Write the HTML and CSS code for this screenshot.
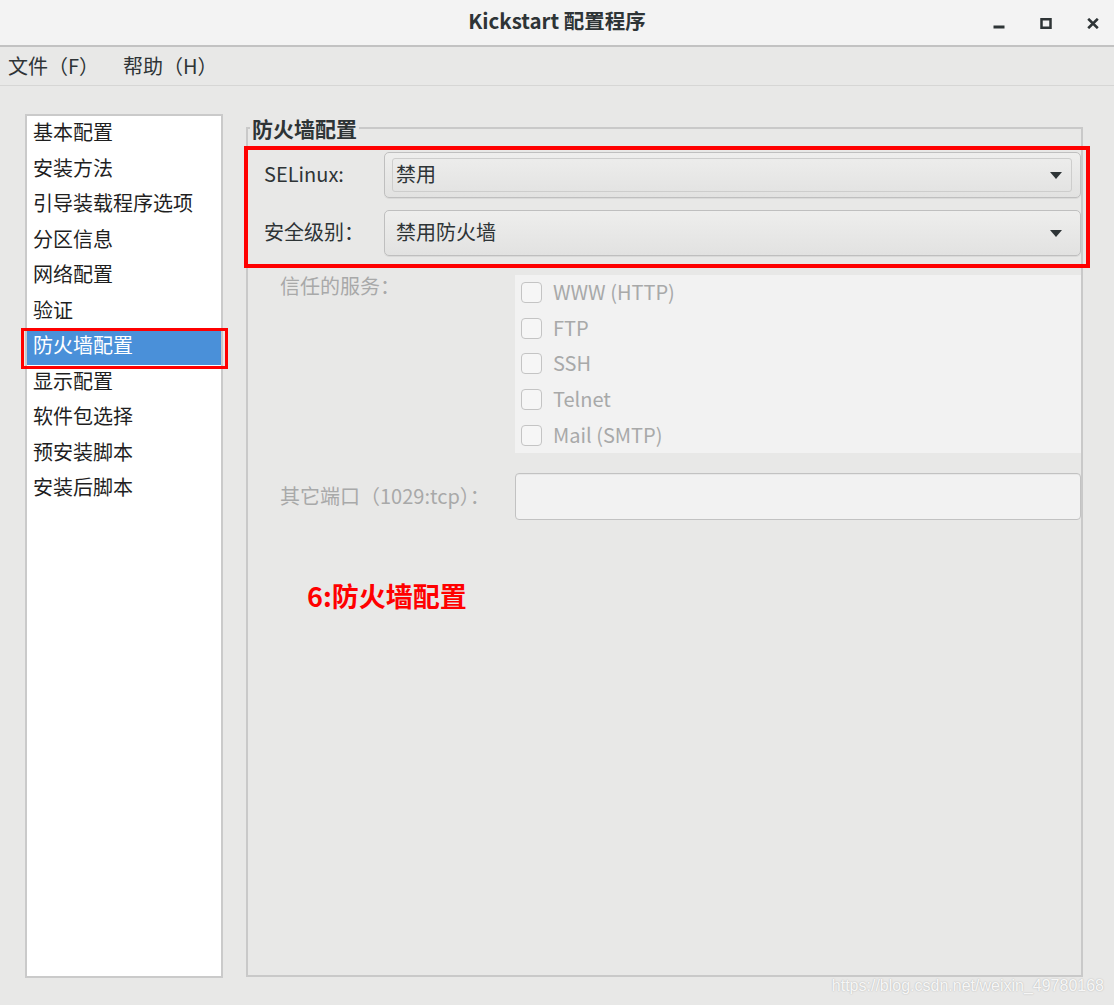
FILE: index.html
```html
<!DOCTYPE html>
<html lang="zh-CN">
<head>
<meta charset="utf-8">
<title>Kickstart 配置程序</title>
<link rel="stylesheet" href="styles.css">
</head>
<body>
<div class="window">
  <header class="titlebar">
    <div class="spacer"></div>
    <div class="title">Kickstart 配置程序</div>
    <div class="wctl">
      <span class="wbtn"><svg width="12" height="11" viewBox="0 0 12 11"><rect x="0.5" y="7.5" width="11" height="3" fill="#2e3436"/></svg></span>
      <span class="wbtn"><svg width="12" height="11" viewBox="0 0 12 11"><rect x="1.5" y="1.25" width="9" height="8.5" fill="none" stroke="#2e3436" stroke-width="2.5"/></svg></span>
      <span class="wbtn"><svg width="12" height="11" viewBox="0 0 12 11"><path d="M1.2 0.8 L10.8 10.2 M10.8 0.8 L1.2 10.2" stroke="#2e3436" stroke-width="2.6" fill="none"/></svg></span>
    </div>
  </header>
  <nav class="menubar">
    <span class="menu-item">文件（F）</span>
    <span class="menu-item">帮助（H）</span>
  </nav>
  <main class="main">
    <ul class="sidebar">
      <li>基本配置</li>
      <li>安装方法</li>
      <li>引导装载程序选项</li>
      <li>分区信息</li>
      <li>网络配置</li>
      <li>验证</li>
      <li class="selected">防火墙配置</li>
      <li>显示配置</li>
      <li>软件包选择</li>
      <li>预安装脚本</li>
      <li>安装后脚本</li>
    </ul>
    <fieldset class="panel">
      <legend>防火墙配置</legend>
      <div class="annot">
        <div class="frow">
          <span class="flabel">SELinux:</span>
          <div class="combo focused">
            <span class="combo-text">禁用</span>
            <svg class="arrow" width="12" height="7" viewBox="0 0 12 7"><path d="M0 0 H12 L6 7 Z" fill="#2e3436"/></svg>
          </div>
        </div>
        <div class="frow">
          <span class="flabel">安全级别：</span>
          <div class="combo">
            <span class="combo-text">禁用防火墙</span>
            <svg class="arrow" width="12" height="7" viewBox="0 0 12 7"><path d="M0 0 H12 L6 7 Z" fill="#2e3436"/></svg>
          </div>
        </div>
      </div>
      <div class="grid">
        <div class="glabel top">信任的服务：</div>
        <div class="services">
          <div class="svc"><span class="cb"></span><span>WWW (HTTP)</span></div>
          <div class="svc"><span class="cb"></span><span>FTP</span></div>
          <div class="svc"><span class="cb"></span><span>SSH</span></div>
          <div class="svc"><span class="cb"></span><span>Telnet</span></div>
          <div class="svc"><span class="cb"></span><span>Mail (SMTP)</span></div>
        </div>
        <div class="glabel mid">其它端口（1029:tcp）：</div>
        <div class="entry"></div>
      </div>
      <div class="note">6:防火墙配置</div>
    </fieldset>
  </main>
  <div class="watermark">https://blog.csdn.net/weixin_49780168</div>
</div>
</body>
</html>
```

FILE: styles.css
```css
* { box-sizing: border-box; }
html, body { margin: 0; padding: 0; }
body {
  width: 1114px;
  height: 1005px;
  overflow: hidden;
  background: #e8e8e7;
  font-family: "Noto Sans CJK SC", "Noto Sans", sans-serif;
  color: #222;
}
.window {
  position: relative;
  width: 1114px;
  height: 1005px;
  display: flex;
  flex-direction: column;
}
.titlebar {
  height: 47px;
  flex: none;
  background: #f3f3f3;
  border-bottom: 2px solid #c2c2c2;
  display: grid;
  grid-template-columns: 1fr auto 1fr;
  align-items: center;
}
.title {
  font-weight: bold;
  font-size: 20.5px;
  line-height: 24px;
  color: #2e3436;
  margin-top: -5px;
}
.wctl {
  display: flex;
  justify-content: flex-end;
  gap: 16px;
  padding-right: 6px;
  margin-top: 1px;
}
.wbtn {
  width: 31px;
  height: 24px;
  display: flex;
  align-items: center;
  justify-content: center;
}
.wbtn svg { display: block; }
.menubar {
  height: 39px;
  flex: none;
  display: flex;
  align-items: center;
  gap: 24px;
  padding-left: 8px;
  border-bottom: 1px solid #d6d6d5;
  font-size: 20px;
  line-height: 38px;
  color: #2e3436;
}
.main {
  flex: 1;
  display: flex;
  gap: 23px;
  padding: 28px 31px 27px 25px;
  min-height: 0;
}
.sidebar {
  list-style: none;
  margin: 0;
  padding: 0;
  width: 198px;
  flex: none;
  background: #fff;
  border: 2px solid #cacaca;
  font-size: 20px;
}
.sidebar li {
  position: relative;
  height: 35.5px;
  line-height: 31.5px;
  padding: 0 0 4px 6px;
  color: #1f1f1f;
  white-space: nowrap;
}
.sidebar li.selected {
  background: #4a90d9;
  color: #fff;
}
.sidebar li.selected::after {
  content: "";
  position: absolute;
  left: -6px;
  right: -7px;
  top: -1px;
  bottom: -4px;
  border: 3px solid #ff0000;
}
.panel {
  flex: 1;
  margin: 2px 0 1px 0;
  padding: 0;
  border: 2px solid #c9c9c9;
  min-width: 0;
}
.panel legend {
  font-weight: bold;
  font-size: 21px;
  line-height: 24px;
  color: #2e3436;
  padding: 0 2px;
  margin-left: 2px;
}
.annot {
  margin: 6px -9px 0 -4px;
  border: 4px solid #ff0000;
  padding: 2px 5px 8px 16px;
  display: flex;
  flex-direction: column;
  gap: 12px;
}
.frow {
  display: flex;
  align-items: center;
  height: 46px;
}
.flabel {
  width: 120px;
  flex: none;
  font-size: 20px;
  color: #2e3436;
  margin-top: -3px;
}
.combo {
  position: relative;
  flex: 1;
  height: 46px;
  display: flex;
  align-items: center;
  padding: 0 18px 0 11px;
  border: 1px solid #bfbfbf;
  border-radius: 5px;
  background: linear-gradient(#eeeeed, #e2e2e1);
  box-shadow: 0 1px 0 rgba(0,0,0,0.06);
  font-size: 20px;
  color: #2e3436;
}
.combo.focused::before {
  content: "";
  position: absolute;
  left: 7px;
  right: 8px;
  top: 5px;
  bottom: 5px;
  border: 1px solid #cdcdcc;
  border-radius: 3px;
}
.combo-text { flex: 1; position: relative; margin-top: -3px; }
.arrow { display: block; position: relative; }
.grid {
  display: grid;
  grid-template-columns: 235px 1fr;
  row-gap: 20px;
  margin-top: 7px;
  padding-left: 32px;
}
.glabel {
  font-size: 20px;
  color: #a8a9a9;
  white-space: nowrap;
}
.glabel.top { align-self: start; line-height: 22px; }
.glabel.mid { align-self: center; margin-top: -2px; }
.services {
  background: #f2f2f2;
  height: 178px;
  padding-left: 6px;
}
.svc {
  height: 35.6px;
  display: flex;
  align-items: center;
  font-size: 20px;
  color: #a8a9a9;
}
.svc span:last-child { margin-top: -2px; }
.cb {
  width: 21px;
  height: 21px;
  border: 1px solid #c4c4c4;
  border-radius: 4px;
  background: #f6f6f6;
  margin-right: 11px;
  flex: none;
}
.entry {
  height: 47px;
  border: 1px solid #c2c2c2;
  border-radius: 4px;
  background: #f2f2f2;
  box-shadow: inset 0 1px 0 rgba(0,0,0,0.04);
}
.note {
  margin-top: 58px;
  padding-left: 59px;
  font-size: 27px;
  line-height: 36px;
  font-weight: bold;
  color: #ff0000;
}
.watermark {
  position: absolute;
  right: 10px;
  bottom: 10px;
  font-family: "Liberation Sans", Arial, sans-serif;
  font-size: 16px;
  line-height: 18px;
  color: rgba(255,255,255,0.9);
  text-shadow: 0 0 1.5px rgba(0,0,0,0.28);
}
```
